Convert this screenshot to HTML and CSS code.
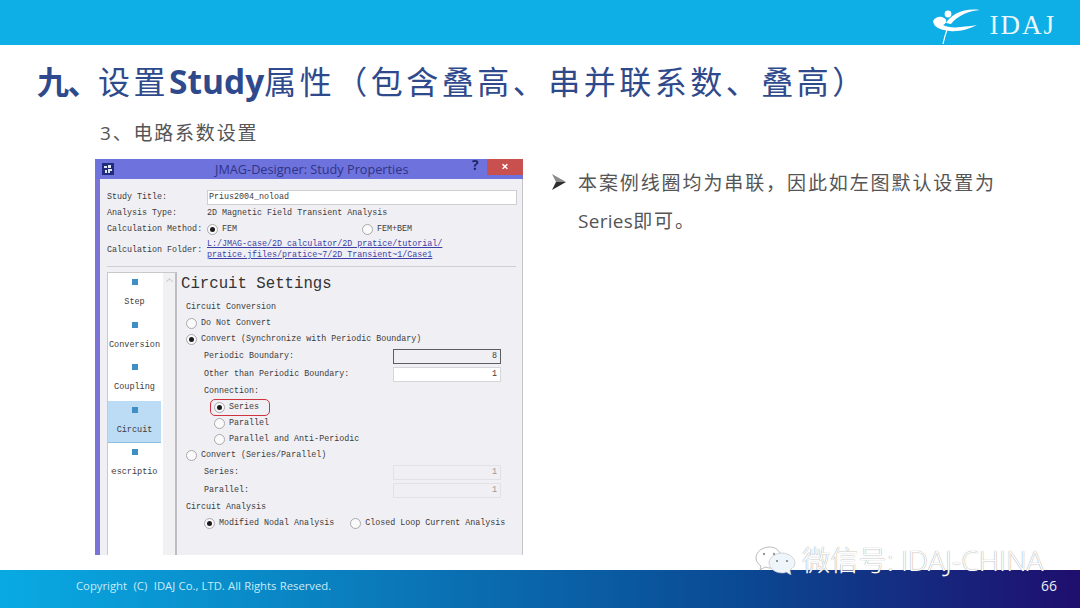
FILE: index.html
```html
<!DOCTYPE html>
<html lang="zh">
<head>
    <meta charset="UTF-8">
    <title>IDAJ</title>
    <link rel="stylesheet" href="styles.css">
</head>
<body>
    <div class="top-bar">
        <svg class="logo-mark" viewBox="0 0 48 36" width="48" height="36">
            <circle cx="15" cy="6" r="3.4" fill="#fff"/>
            <path d="M0 13 C3 8 8 8 11 10 C15 12 13 16 10 17 C14 19 20 20 28 19 C33 18.500 38 18 44 17 C36 21 26 24 17 23 C8 22 1 20 0 13 Z" fill="#fff"/>
            <path d="M13 15 C19 6 30 0 47 2 C36 3 25 7 18 16 Z" fill="#fff"/>
            <path d="M14 22 C12 27 11 31 10 36" stroke="#fff" stroke-width="1.2" fill="none"/>
        </svg>
        <span class="logo-text">IDAJ</span>
    </div>

    <div class="content">
        <h1 class="page-title"><b class="num-mark">九、</b>设置<b class="latin">Study</b>属性（包含叠高、串并联系数、叠高）</h1>
        <h2 class="sub-title">3、电路系数设置</h2>

        <div class="columns">
            <div class="dialog">
                <div class="title-bar">
                    <svg class="app-icon" viewBox="0 0 12 12" width="12" height="12">
                        <rect width="12" height="12" fill="#1f2a78"/>
                        <path d="M2 3h3v2H2zM6 2h3v3H6zM3 7h2v3H3zM6 6h4v2H8v2H6z" fill="#dfe6f5"/>
                    </svg>
                    <span class="dialog-name">JMAG-Designer: Study Properties</span>
                    <span class="help">?</span>
                    <span class="close">×</span>
                </div>
                <div class="dialog-body">
                    <div class="form">
                        <span class="form-label">Study Title:</span>
                        <div class="text-input">Prius2004_noload</div>
                        <span class="form-label">Analysis Type:</span>
                        <span>2D Magnetic Field Transient Analysis</span>
                        <span class="form-label">Calculation Method:</span>
                        <div class="method">
                            <span class="choice"><i class="radio checked"></i>FEM</span>
                            <span class="choice"><i class="radio"></i>FEM+BEM</span>
                        </div>
                        <span class="form-label">Calculation Folder:</span>
                        <div class="folder">L:/JMAG-case/2D calculator/2D pratice/tutorial/<br>pratice.jfiles/pratice~7/2D Transient~1/Case1</div>
                    </div>
                    <div class="separator"></div>
                    <div class="split">
                        <div class="side-list">
                            <div class="steps">
                                <div class="step"><i></i><span>Step</span></div>
                                <div class="step"><i></i><span>Conversion</span></div>
                                <div class="step"><i></i><span>Coupling</span></div>
                                <div class="step active"><i></i><span>Circuit</span></div>
                                <div class="step"><i></i><span class="clip">Description</span></div>
                            </div>
                            <div class="scroll"><span class="scroll-up"></span></div>
                        </div>
                        <div class="panel">
                            <div class="panel-title">Circuit Settings</div>
                            <div class="row">Circuit Conversion</div>
                            <div class="row indent-1"><i class="radio"></i>Do Not Convert</div>
                            <div class="row indent-1"><i class="radio checked"></i>Convert (Synchronize with Periodic Boundary)</div>
                            <div class="row field">Periodic Boundary:<div class="num focus">8</div></div>
                            <div class="row field">Other than Periodic Boundary:<div class="num">1</div></div>
                            <div class="row indent-2">Connection:</div>
                            <div class="row indent-3"><span class="mark"><i class="radio checked"></i>Series</span></div>
                            <div class="row indent-3"><i class="radio"></i>Parallel</div>
                            <div class="row indent-3"><i class="radio"></i>Parallel and Anti-Periodic</div>
                            <div class="row indent-1"><i class="radio"></i>Convert (Series/Parallel)</div>
                            <div class="row field">Series:<div class="num off">1</div></div>
                            <div class="row field">Parallel:<div class="num off">1</div></div>
                            <div class="row">Circuit Analysis</div>
                            <div class="row indent-4"><i class="radio checked"></i>Modified Nodal Analysis<i class="radio second"></i>Closed Loop Current Analysis</div>
                        </div>
                    </div>
                </div>
            </div>

            <div class="notes">
                <svg class="arrow" viewBox="0 0 14 16" width="14" height="16">
                    <path d="M0 0 L14 8 L4 8 Z" fill="#8a8a8a"/>
                    <path d="M0 16 L14 8 L4 8 Z" fill="#2e2e2e"/>
                </svg>
                <p>本案例线圈均为串联，因此如左图默认设置为<br><span class="latin-word">Series</span>即可。</p>
            </div>
        </div>
    </div>

    <div class="bottom-bar">
        <span class="copyright">Copyright&nbsp; (C)&nbsp; IDAJ Co., LTD. All Rights Reserved.</span>
        <span class="page-num">66</span>
    </div>

    <div class="watermark">
        <svg viewBox="0 0 42 30" width="42" height="30">
            <path d="M15 2C7 2 1 7 1 13c0 3 2 6 5 8l-1 4 5-3c1 0 3 1 5 1 4 0 8-2 10-5 2-3 2-7 0-10-2-4-6-6-10-6Z" fill="#fff" stroke="#aaa" stroke-width=".8"/>
            <path d="M27 8c-7 0-13 5-13 10s6 10 13 10c2 0 3 0 4-1l5 3-1-5c3-2 5-4 5-7 0-5-6-10-13-10Z" fill="#eef5fb" stroke="#bbb" stroke-width=".6"/>
            <circle cx="9" cy="9" r="1.200" fill="#999"/><circle cx="19" cy="9" r="1.200" fill="#999"/>
            <circle cx="22" cy="16" r="1" fill="#777"/><circle cx="32" cy="16" r="1" fill="#777"/>
        </svg>
        <span>微信号: IDAJ-CHINA</span>
    </div>
</body>
</html>
```

FILE: styles.css
```css
* {
    margin: 0;
    padding: 0;
    box-sizing: border-box;
}

body {
    width: 1080px;
    height: 608px;
    display: flex;
    flex-direction: column;
    position: relative;
    overflow: hidden;
    background-color: #fff;
    font-family: "Open Sans", "Noto Sans CJK SC", sans-serif;
}

.top-bar {
    height: 45px;
    flex: none;
    display: flex;
    align-items: flex-start;
    justify-content: flex-end;
    padding: 8px 24px 0 0;
    background-color: #0eaee6;
}

.logo-mark {
    margin-right: 9px;
}

.logo-text {
    margin-top: 2px;
    font-family: "Liberation Serif", serif;
    font-size: 27px;
    line-height: 30px;
    letter-spacing: 2px;
    color: #eaf8fd;
}

.content {
    flex: 1;
    min-height: 0;
    display: flex;
    flex-direction: column;
}

.page-title {
    margin: 13px 0 0 37px;
    font-size: 32px;
    line-height: 46px;
    font-weight: 400;
    letter-spacing: 3.5px;
    white-space: nowrap;
    color: #2f4a8c;
}

.page-title .num-mark {
    letter-spacing: -1.5px;
}

.page-title .latin {
    font-size: 33.5px;
    letter-spacing: 0;
}

.sub-title {
    margin: 14px 0 0 100px;
    font-size: 19px;
    line-height: 28px;
    font-weight: 400;
    letter-spacing: 1.8px;
    color: #555;
}

.columns {
    display: flex;
    margin: 12px 0 0 95px;
}

/* dialog */
.dialog {
    width: 428px;
    height: 396px;
    flex: none;
    display: flex;
    flex-direction: column;
    font-family: "Liberation Mono", monospace;
    font-size: 8.35px;
    color: #3c3c3c;
    filter: blur(0.35px);
}

.title-bar {
    height: 20px;
    flex: none;
    display: flex;
    align-items: flex-start;
    position: relative;
    padding: 4px 0 0 7px;
    background-color: #6d72dd;
    font-family: "Open Sans", sans-serif;
}

.dialog-name {
    position: absolute;
    left: 120px;
    top: 1px;
    font-size: 12.7px;
    line-height: 18px;
    color: #2f3486;
}

.help {
    position: absolute;
    left: 377px;
    top: -3px;
    font-size: 14px;
    font-weight: 700;
    line-height: 18px;
    color: #1d2560;
}

.close {
    position: absolute;
    right: 0;
    top: 0;
    width: 36px;
    height: 16px;
    background-color: #c8504f;
    color: #fff;
    font-size: 13px;
    font-weight: 700;
    line-height: 15px;
    text-align: center;
}

.dialog-body {
    flex: 1;
    min-height: 0;
    display: flex;
    flex-direction: column;
    padding: 0 0 0 12px;
    border-left: 5px solid #7a74d8;
    border-right: 1px solid #c4c4c8;
    background-color: #f0eff4;
}

.form {
    display: grid;
    grid-template-columns: 100px 310px;
    grid-template-rows: 16px 16px 16px 26px;
    align-items: center;
    margin-top: 10px;
    margin-left: -5px;
    margin-bottom: -1px;
}

.form > span {
    white-space: nowrap;
}

.text-input {
    height: 15px;
    line-height: 13px;
    padding-left: 1px;
    background-color: #fff;
    border: 1px solid #cfcfd2;
}

.method {
    display: flex;
}

.choice {
    width: 155px;
    display: flex;
    align-items: center;
}

.choice .radio {
    margin-right: 4px;
}

.folder {
    font-size: 8.35px;
    line-height: 11px;
    color: #3b3fa6;
    text-decoration: underline;
    white-space: nowrap;
}

.separator {
    height: 1px;
    width: 409px;
    margin: 4px 0 5px -5px;
    background-color: #cfcfd2;
}

.split {
    flex: 1;
    min-height: 0;
    display: flex;
    margin-left: -5px;
}

.side-list {
    width: 70px;
    flex: none;
    display: flex;
    border-left: 1px solid #c9c9cc;
    border-top: 1px solid #c9c9cc;
    border-right: 2px solid #bdbdc2;
}

.steps {
    width: 55px;
    flex: none;
    overflow: hidden;
    background-color: #fff;
}

.step {
    width: 53px;
    height: 42.6px;
    display: flex;
    flex-direction: column;
    align-items: center;
    overflow: hidden;
    padding-top: 6px;
    font-size: 8.5px;
}

.step i {
    width: 6px;
    height: 6px;
    flex: none;
    background-color: #3f8fc4;
}

.step span {
    margin-top: 12px;
    white-space: nowrap;
}

.step .clip {
    width: 47px;
    flex: none;
    display: flex;
    justify-content: center;
    overflow: hidden;
}

.step.active {
    background-color: #bcdcf5;
    border-bottom: 1px solid #8fbfe0;
}

.scroll {
    flex: 1;
    padding: 6px 0 0 3px;
    background-color: #f1f1f4;
}

.scroll-up {
    display: block;
    width: 5px;
    height: 5px;
    margin-left: 1px;
    border-left: 1px solid #ccc;
    border-top: 1px solid #ccc;
    transform: rotate(45deg);
}

.panel {
    flex: 1;
    padding-left: 9px;
}

.panel-title {
    height: 27px;
    margin-left: -5px;
    font-size: 15.7px;
    line-height: 24px;
    color: #333;
}

.row {
    height: 16px;
    display: flex;
    align-items: center;
    white-space: nowrap;
}

.indent-1 {
    padding-left: 0;
}

.indent-2 {
    padding-left: 18px;
}

.indent-3 {
    padding-left: 28px;
}

.indent-4 {
    padding-left: 18px;
}

.radio {
    width: 11px;
    height: 11px;
    flex: none;
    display: inline-flex;
    align-items: center;
    justify-content: center;
    margin-right: 4px;
    border: 1px solid #a9a9ad;
    border-radius: 50%;
    background-color: #fafafa;
}

.radio.checked::after {
    content: "";
    width: 5px;
    height: 5px;
    border-radius: 50%;
    background-color: #1c1c1c;
}

.radio.second {
    margin-left: 16px;
}

.field {
    height: 18px;
    padding: 0 21px 0 18px;
    justify-content: space-between;
}

.num {
    width: 108px;
    height: 15px;
    line-height: 13px;
    padding-right: 3px;
    text-align: right;
    background-color: #fff;
    border: 1px solid #d6d6da;
}

.num.focus {
    background-color: #f0eff4;
    border-color: #5e5e62;
}

.num.off {
    background-color: #f0eff4;
    border-color: #e2e2e5;
    color: #999;
}

.mark {
    display: inline-flex;
    align-items: center;
    width: 60px;
    height: 17px;
    margin-left: -4px;
    padding-left: 3px;
    border: 1.5px solid #cf3340;
    border-radius: 5px;
}

/* right text */
.notes {
    display: flex;
    margin: 5px 0 0 29px;
    font-size: 19px;
    line-height: 38px;
    letter-spacing: 1.9px;
    color: #555;
}

.arrow {
    flex: none;
    margin: 10px 12px 0 0;
}

.notes p {
    white-space: nowrap;
}

.latin-word {
    letter-spacing: 0.3px;
}

.bottom-bar {
    height: 38px;
    flex: none;
    display: flex;
    align-items: center;
    justify-content: space-between;
    padding: 0 23px 8px 76px;
    background: linear-gradient(to right, #09aae3, #0a7dbd 33%, #0a4a94 68%, #1f0e6e);
}

.copyright {
    font-size: 11.3px;
    word-spacing: 0.3px;
    color: #c6ecf8;
}

.page-num {
    font-size: 14px;
    color: #e8eef8;
}

/* sits over the footer edge */
.watermark {
    position: absolute;
    left: 755px;
    top: 545px;
    display: flex;
    align-items: center;
    gap: 5px;
    font-size: 28.3px;
    font-weight: 300;
    line-height: 30px;
    white-space: nowrap;
    color: #fff;
    text-shadow: 0 0 1px #777;
}
```
